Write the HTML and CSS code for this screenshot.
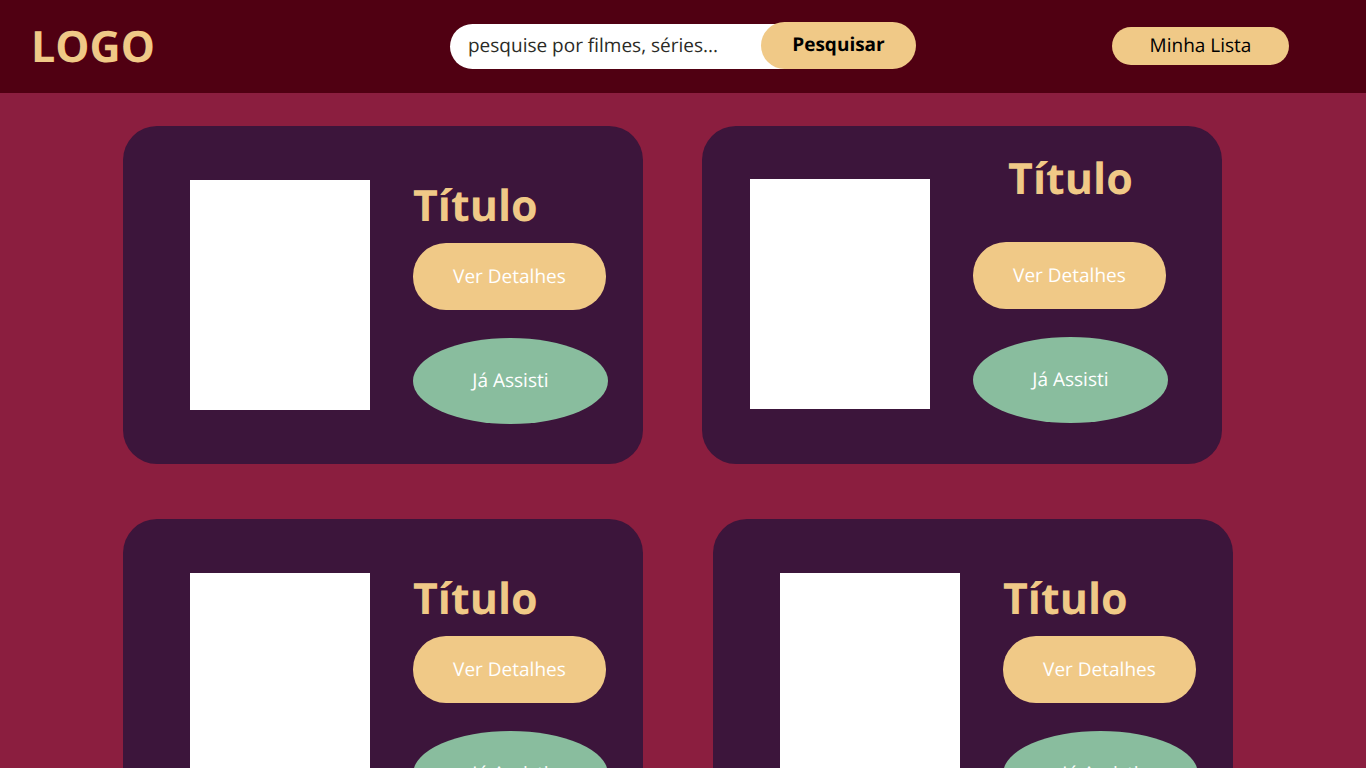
FILE: index.html
```html
<!DOCTYPE html>
<html lang="pt-BR">
<head>
<meta charset="utf-8">
<meta name="viewport" content="width=device-width, initial-scale=1">
<title>Filmes e séries</title>
<link rel="stylesheet" href="styles.css">
</head>
<body>
<header class="topbar">
  <a class="logo" href="#">LOGO</a>
  <form class="search" role="search">
    <input class="search-input" type="text" aria-label="Pesquisa" placeholder="pesquise por filmes, séries...">
    <button class="search-button" type="submit">Pesquisar</button>
  </form>
  <a class="my-list" href="#">Minha Lista</a>
</header>
<main class="catalog">
  <section class="row">
    <article class="card">
      <div class="poster"></div>
      <div class="info">
        <h2 class="title">Título</h2>
        <button class="details" type="button">Ver Detalhes</button>
        <button class="watched" type="button">Já Assisti</button>
      </div>
    </article>
    <article class="card card-featured">
      <div class="poster"></div>
      <div class="info">
        <h2 class="title">Título</h2>
        <button class="details" type="button">Ver Detalhes</button>
        <button class="watched" type="button">Já Assisti</button>
      </div>
    </article>
  </section>
  <section class="row row-wide">
    <article class="card">
      <div class="poster"></div>
      <div class="info">
        <h2 class="title">Título</h2>
        <button class="details" type="button">Ver Detalhes</button>
        <button class="watched" type="button">Já Assisti</button>
      </div>
    </article>
    <article class="card">
      <div class="poster"></div>
      <div class="info">
        <h2 class="title">Título</h2>
        <button class="details" type="button">Ver Detalhes</button>
        <button class="watched" type="button">Já Assisti</button>
      </div>
    </article>
  </section>
</main>
</body>
</html>
```
FILE: styles.css
```css
* {
  box-sizing: border-box;
}

body {
  margin: 0;
  background: #8b1e3f;
  font-family: "Open Sans", "Noto Sans", sans-serif;
  font-size: 19px;
  line-height: 26px;
  text-rendering: geometricPrecision;
}

button,
input {
  border: 0;
  font: inherit;
  text-rendering: inherit;
}

button {
  cursor: pointer;
}

.topbar {
  display: grid;
  grid-template-columns: 1fr auto 1fr;
  align-items: center;
  padding: 16px 77px 17px 31px;
  background: #500012;
}

.logo {
  color: #f0c987;
  font-size: 43px;
  font-weight: 700;
  line-height: 60px;
  text-decoration: none;
}

.search {
  display: flex;
  align-items: flex-end;
  margin: 0 0 2px 46px;
}

.search-input {
  width: 343px;
  padding: 8px 18px 11px;
  border-radius: 23px 0 0 23px;
  background: #fff;
  color: #2b2b26;
}

.search-input::placeholder {
  color: #2b2b26;
  opacity: 1;
}

.search-button {
  width: 155px;
  margin-left: -32px;
  padding: 9px 16px 12px;
  border-radius: 24px;
  background: #f0c987;
  color: #000;
  font-weight: 700;
}

.my-list {
  width: 177px;
  justify-self: end;
  padding: 5px 16px 7px;
  border-radius: 19px;
  background: #f0c987;
  color: #000;
  text-align: center;
  text-decoration: none;
}

.catalog {
  display: flex;
  flex-direction: column;
  gap: 55px;
  padding: 33px 9% 55px;
}

.row {
  display: flex;
  gap: 59px;
}

.row-wide {
  gap: 70px;
}

.card {
  display: flex;
  flex: 0 0 520px;
  gap: 43px;
  padding: 54px 35px 40px 67px;
  border-radius: 34px;
  background: #3c153b;
}

.card-featured {
  padding: 53px 35px 40px 48px;
}

.poster {
  flex: none;
  width: 180px;
  height: 230px;
  background: #fff;
}

.info {
  display: flex;
  flex-direction: column;
  align-items: flex-start;
}

.title {
  margin: 0 0 13px;
  color: #f0c987;
  font-size: 43px;
  font-weight: 700;
  line-height: 50px;
}

.card-featured .title {
  align-self: center;
  margin: -26px 0 39px;
}

.details,
.watched {
  padding: 20px 16px 21px;
  background: #f0c987;
  color: #fff;
}

.details {
  width: 193px;
  margin-bottom: 28px;
  border-radius: 33px;
}

.watched {
  width: 195px;
  padding: 29px 16px 31px;
  border-radius: 50%;
  background: #89bd9e;
}
```
